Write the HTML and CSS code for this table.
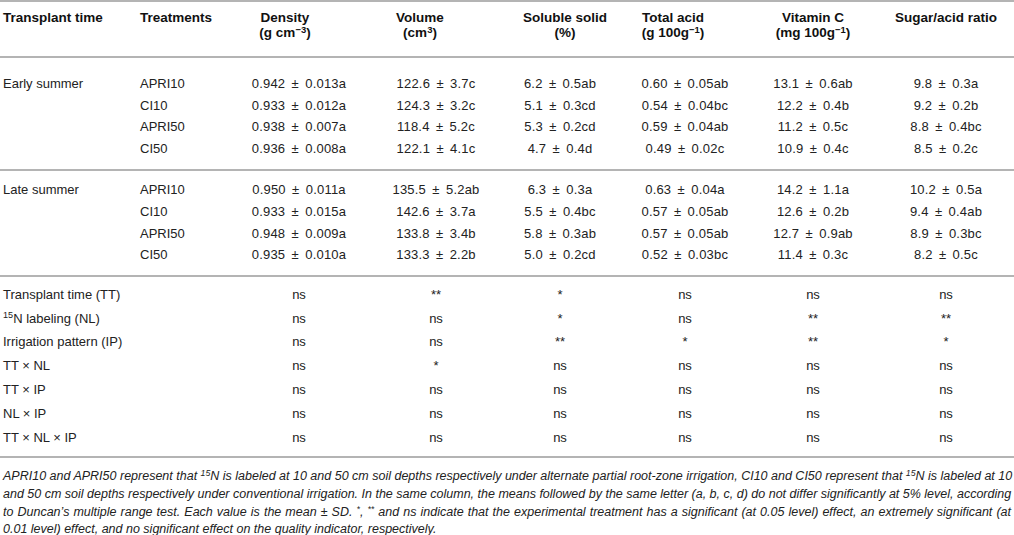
FILE: index.html
```html
<!DOCTYPE html>
<html>
<head>
<meta charset="utf-8">
<link rel="stylesheet" href="styles.css">
</head>
<body>
<table class="tbl">
<colgroup>
<col class="w1"><col class="w2"><col class="w3"><col class="w4"><col class="w5"><col class="w6"><col class="w7"><col class="w8">
</colgroup>
<thead>
<tr>
<th class="k1">Transplant time</th>
<th class="k2">Treatments</th>
<th class="k3"><span class="hb">Density<br>(g cm<sup>−3</sup>)</span></th>
<th class="k4"><span class="hb">Volume<br>(cm<sup>3</sup>)</span></th>
<th class="k5"><span class="hb">Soluble solid<br>(%)</span></th>
<th class="k6"><span class="hb">Total acid<br>(g 100g<sup>−1</sup>)</span></th>
<th class="k7"><span class="hb">Vitamin C<br>(mg 100g<sup>−1</sup>)</span></th>
<th class="k8"><span class="hb">Sugar/acid ratio</span></th>
</tr>
</thead>
<tbody class="g1">
<tr class="top"><td class="k1">Early summer</td><td class="k2">APRI10</td><td class="k3">0.942 ± 0.013a</td><td class="k4">122.6 ± 3.7c</td><td class="k5">6.2 ± 0.5ab</td><td class="k6">0.60 ± 0.05ab</td><td class="k7">13.1 ± 0.6ab</td><td class="k8">9.8 ± 0.3a</td></tr>
<tr><td class="k1"></td><td class="k2">CI10</td><td class="k3">0.933 ± 0.012a</td><td class="k4">124.3 ± 3.2c</td><td class="k5">5.1 ± 0.3cd</td><td class="k6">0.54 ± 0.04bc</td><td class="k7">12.2 ± 0.4b</td><td class="k8">9.2 ± 0.2b</td></tr>
<tr><td class="k1"></td><td class="k2">APRI50</td><td class="k3">0.938 ± 0.007a</td><td class="k4">118.4 ± 5.2c</td><td class="k5">5.3 ± 0.2cd</td><td class="k6">0.59 ± 0.04ab</td><td class="k7">11.2 ± 0.5c</td><td class="k8">8.8 ± 0.4bc</td></tr>
<tr class="bot"><td class="k1"></td><td class="k2">CI50</td><td class="k3">0.936 ± 0.008a</td><td class="k4">122.1 ± 4.1c</td><td class="k5">4.7 ± 0.4d</td><td class="k6">0.49 ± 0.02c</td><td class="k7">10.9 ± 0.4c</td><td class="k8">8.5 ± 0.2c</td></tr>
</tbody>
<tbody class="g2">
<tr class="top"><td class="k1">Late summer</td><td class="k2">APRI10</td><td class="k3">0.950 ± 0.011a</td><td class="k4">135.5 ± 5.2ab</td><td class="k5">6.3 ± 0.3a</td><td class="k6">0.63 ± 0.04a</td><td class="k7">14.2 ± 1.1a</td><td class="k8">10.2 ± 0.5a</td></tr>
<tr><td class="k1"></td><td class="k2">CI10</td><td class="k3">0.933 ± 0.015a</td><td class="k4">142.6 ± 3.7a</td><td class="k5">5.5 ± 0.4bc</td><td class="k6">0.57 ± 0.05ab</td><td class="k7">12.6 ± 0.2b</td><td class="k8">9.4 ± 0.4ab</td></tr>
<tr><td class="k1"></td><td class="k2">APRI50</td><td class="k3">0.948 ± 0.009a</td><td class="k4">133.8 ± 3.4b</td><td class="k5">5.8 ± 0.3ab</td><td class="k6">0.57 ± 0.05ab</td><td class="k7">12.7 ± 0.9ab</td><td class="k8">8.9 ± 0.3bc</td></tr>
<tr class="bot"><td class="k1"></td><td class="k2">CI50</td><td class="k3">0.935 ± 0.010a</td><td class="k4">133.3 ± 2.2b</td><td class="k5">5.0 ± 0.2cd</td><td class="k6">0.52 ± 0.03bc</td><td class="k7">11.4 ± 0.3c</td><td class="k8">8.2 ± 0.5c</td></tr>
</tbody>
<tbody class="g3">
<tr class="top"><td class="lab" colspan="2">Transplant time (TT)</td><td class="k3">ns</td><td class="k4">**</td><td class="k5">*</td><td class="k6">ns</td><td class="k7">ns</td><td class="k8">ns</td></tr>
<tr><td class="lab" colspan="2"><sup>15</sup>N labeling (NL)</td><td class="k3">ns</td><td class="k4">ns</td><td class="k5">*</td><td class="k6">ns</td><td class="k7">**</td><td class="k8">**</td></tr>
<tr><td class="lab" colspan="2">Irrigation pattern (IP)</td><td class="k3">ns</td><td class="k4">ns</td><td class="k5">**</td><td class="k6">*</td><td class="k7">**</td><td class="k8">*</td></tr>
<tr><td class="lab" colspan="2">TT × NL</td><td class="k3">ns</td><td class="k4">*</td><td class="k5">ns</td><td class="k6">ns</td><td class="k7">ns</td><td class="k8">ns</td></tr>
<tr><td class="lab" colspan="2">TT × IP</td><td class="k3">ns</td><td class="k4">ns</td><td class="k5">ns</td><td class="k6">ns</td><td class="k7">ns</td><td class="k8">ns</td></tr>
<tr><td class="lab" colspan="2">NL × IP</td><td class="k3">ns</td><td class="k4">ns</td><td class="k5">ns</td><td class="k6">ns</td><td class="k7">ns</td><td class="k8">ns</td></tr>
<tr class="bot"><td class="lab" colspan="2">TT × NL × IP</td><td class="k3">ns</td><td class="k4">ns</td><td class="k5">ns</td><td class="k6">ns</td><td class="k7">ns</td><td class="k8">ns</td></tr>
</tbody>
</table>
<div class="note">
<span class="ln">APRI10 and APRI50 represent that <sup>15</sup>N is labeled at 10 and 50 cm soil depths respectively under alternate partial root-zone irrigation, CI10 and CI50 represent that <sup>15</sup>N is labeled at 10</span>
<span class="ln">and 50 cm soil depths respectively under conventional irrigation. In the same column, the means followed by the same letter (a, b, c, d) do not differ significantly at 5% level, according</span>
<span class="ln">to Duncan’s multiple range test. Each value is the mean ± SD. <sup>*</sup>, <sup>**</sup> and ns indicate that the experimental treatment has a significant (at 0.05 level) effect, an extremely significant (at</span>
<span class="ln last">0.01 level) effect, and no significant effect on the quality indicator, respectively.</span>
</div>
</body>
</html>
```

FILE: styles.css
```css
* { box-sizing: border-box; }
html, body { margin: 0; padding: 0; background: #fff; }
body {
  width: 1014px;
  font-family: "Liberation Sans", Arial, Helvetica, sans-serif;
  color: #222;
}
sup {
  font-size: 0.7em;
  line-height: 0;
  vertical-align: 0.5em;
}

.tbl {
  width: 1014px;
  border-collapse: collapse;
  table-layout: fixed;
  font-size: 13px;
}
.w1 { width: 137px; }
.w2 { width: 94px; }
.w3 { width: 136px; }
.w4 { width: 138px; }
.w5 { width: 110px; }
.w6 { width: 140px; }
.w7 { width: 123px; }
.w8 { width: 136px; }

.tbl th, .tbl td {
  padding: 0;
  text-align: center;
  white-space: nowrap;
  vertical-align: middle;
  font-weight: normal;
}
.tbl thead tr {
  border-top: 2px solid #b4b4b4;
  border-bottom: 2px solid #b4b4b4;
}
.tbl thead th {
  font-size: 13.5px;
  font-weight: bold;
  color: #111;
  vertical-align: top;
  line-height: 14.5px;
  padding-top: 9px;
  height: 56px;
}
.tbl thead sup {
  font-size: 0.7em;
  vertical-align: 0.45em;
}
.hb { display: inline-block; text-align: center; }

.tbl tbody { border-bottom: 2px solid #b4b4b4; }
.g1 td, .g2 td { height: 21.6px; line-height: 21.6px; }
.g1 td.k3, .g1 td.k4, .g1 td.k5, .g1 td.k6, .g1 td.k7, .g1 td.k8,
.g2 td.k3, .g2 td.k4, .g2 td.k5, .g2 td.k6, .g2 td.k7, .g2 td.k8 {
  word-spacing: 2.5px;
  letter-spacing: 0.2px;
}
.g3 td { height: 23.8px; line-height: 23.8px; }

.g1 .top td { padding-top: 15px; height: 36.6px; }
.g1 .bot td { padding-bottom: 10px; height: 31.6px; }
.g2 .top td { padding-top: 8px; height: 29.6px; }
.g2 .bot td { padding-bottom: 9px; height: 30.6px; }
.g3 .top td { padding-top: 6px; height: 29.8px; }
.g3 .bot td { padding-bottom: 7px; height: 30.8px; }

.tbl .k1, .tbl .lab, .tbl .k2 { text-align: left; padding-left: 3px; }

.tbl .k7 { padding-right: 7px; }
.tbl th.k3 { padding-right: 28px; }
.tbl th.k4 { padding-right: 32px; }
.tbl th.k5 { padding-left: 10px; }
.tbl th.k6 { padding-right: 24px; }

.note {
  padding: 10px 3px 0 3px;
  font-size: 12.5px;
  font-style: italic;
  line-height: 17.6px;
  color: #222;
}
.ln {
  display: block;
  white-space: nowrap;
  text-align: justify;
  text-align-last: justify;
}
.ln.last { text-align-last: left; }
```
